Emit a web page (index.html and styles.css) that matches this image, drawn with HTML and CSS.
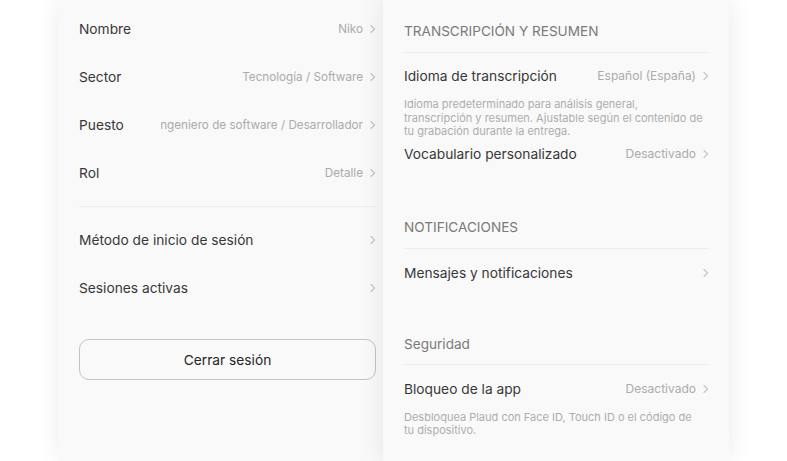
FILE: index.html
```html
<!DOCTYPE html>
<html lang="es">
<head>
<meta charset="utf-8">
<title>Ajustes</title>
<link rel="stylesheet" href="styles.css">
</head>
<body>
<div class="stage">
  <section class="panel panel-left">
    <div class="row"><span class="label">Nombre</span><span class="value">Niko</span><svg class="chev" viewBox="0 0 6 10"><path d="M1 1.5 L4.6 5 L1 8.5"/></svg></div>
    <div class="row"><span class="label">Sector</span><span class="value">Tecnología / Software</span><svg class="chev" viewBox="0 0 6 10"><path d="M1 1.5 L4.6 5 L1 8.5"/></svg></div>
    <div class="row"><span class="label">Puesto</span><span class="value clip"><span>Ingeniero de software / Desarrollador</span></span><svg class="chev" viewBox="0 0 6 10"><path d="M1 1.5 L4.6 5 L1 8.5"/></svg></div>
    <div class="row"><span class="label">Rol</span><span class="value">Detalle</span><svg class="chev" viewBox="0 0 6 10"><path d="M1 1.5 L4.6 5 L1 8.5"/></svg></div>
    <div class="divider gap"></div>
    <div class="row"><span class="label">Método de inicio de sesión</span><svg class="chev push" viewBox="0 0 6 10"><path d="M1 1.5 L4.6 5 L1 8.5"/></svg></div>
    <div class="row"><span class="label">Sesiones activas</span><svg class="chev push" viewBox="0 0 6 10"><path d="M1 1.5 L4.6 5 L1 8.5"/></svg></div>
    <button class="logout">Cerrar sesión</button>
  </section>
  <section class="panel panel-right">
    <h2 class="sec-title first">TRANSCRIPCIÓN Y RESUMEN</h2>
    <div class="divider"></div>
    <div class="item item-first"><span class="label">Idioma de transcripción</span><span class="value">Español (España)</span><svg class="chev" viewBox="0 0 6 10"><path d="M1 1.5 L4.6 5 L1 8.5"/></svg></div>
    <p class="desc desc-first">Idioma predeterminado para análisis general, transcripción y resumen. Ajustable según el contenido de tu grabación durante la entrega.</p>
    <div class="item tight"><span class="label">Vocabulario personalizado</span><span class="value">Desactivado</span><svg class="chev" viewBox="0 0 6 10"><path d="M1 1.5 L4.6 5 L1 8.5"/></svg></div>
    <h2 class="sec-title after-tight">NOTIFICACIONES</h2>
    <div class="divider"></div>
    <div class="item"><span class="label">Mensajes y notificaciones</span><svg class="chev push" viewBox="0 0 6 10"><path d="M1 1.5 L4.6 5 L1 8.5"/></svg></div>
    <h2 class="sec-title sec-last">Seguridad</h2>
    <div class="divider"></div>
    <div class="item"><span class="label">Bloqueo de la app</span><span class="value">Desactivado</span><svg class="chev" viewBox="0 0 6 10"><path d="M1 1.5 L4.6 5 L1 8.5"/></svg></div>
    <p class="desc desc-first">Desbloquea Plaud con Face ID, Touch ID o el código de tu&nbsp;dispositivo.</p>
  </section>
</div>
</body>
</html>
```
FILE: styles.css
```css
* { box-sizing: border-box; }
html, body { margin: 0; padding: 0; background: #ffffff; }
body {
  font-family: Inter, "Noto Sans", "Liberation Sans", sans-serif;
  color: #333333;
  height: 461px;
  overflow: hidden;
}
.stage {
  display: flex;
  height: 461px;
  padding-left: 58px;
}
.panel {
  background: #f9f9f9;
  height: 461px;
}
.panel-left {
  width: 325px;
  padding: 5px 7px 0 21px;
  box-shadow: 0 0 22px rgba(0,0,0,0.07);
}
.panel-right {
  width: 346px;
  padding: 0 20px 0 21px;
  box-shadow: 0 0 24px rgba(0,0,0,0.09);
  position: relative;
  z-index: 1;
}
.row {
  display: flex;
  align-items: center;
  height: 48px;
}
.label {
  font-size: 13.75px;
  line-height: 20px;
  color: #383838;
  white-space: nowrap;
}
.value {
  margin-left: auto;
  font-size: 12px;
  line-height: 16px;
  color: #ababab;
  white-space: nowrap;
}
.panel-left .value { font-size: 11.7px; }
.value.clip {
  width: 202px;
  overflow: hidden;
  display: flex;
  justify-content: flex-end;
}
.value.clip span { flex: none; }
.chev {
  width: 6px;
  height: 10px;
  margin-left: 7px;
  flex: none;
}
.chev.push { margin-left: auto; }
.chev path {
  fill: none;
  stroke: #c4c4c4;
  stroke-width: 1.1;
  stroke-linecap: round;
  stroke-linejoin: round;
}
.divider {
  height: 1px;
  background: #ececec;
}
.divider.gap { margin: 9px 0 9px; }
.logout {
  display: block;
  width: 100%;
  height: 41px;
  margin-top: 27px;
  border: 1px solid #c3c3c3;
  border-radius: 10px;
  background: #f9f9f9;
  font-family: Inter, "Noto Sans", "Liberation Sans", sans-serif;
  font-size: 13.75px;
  color: #262626;
  padding: 0;
}
.sec-title {
  margin: 52px 0 0;
  padding-bottom: 11px;
  font-size: 13.6px;
  line-height: 20px;
  font-weight: 400;
  color: #7a7a7a;
}
.sec-title.first { margin-top: 21px; }
.sec-title.after-tight { margin-top: 53px; }
.sec-title.sec-last { margin-top: 51px; padding-bottom: 10px; }
.item {
  display: flex;
  align-items: center;
  height: 20px;
  margin-top: 14px;
}
.item.item-first { margin-top: 13px; }
.item.tight { margin-top: 5px; }
.desc {
  margin: 11px 0 0;
  font-size: 11px;
  line-height: 13.6px;
  color: #adadad;
}
.desc.desc-first { margin-top: 12px; }
```
